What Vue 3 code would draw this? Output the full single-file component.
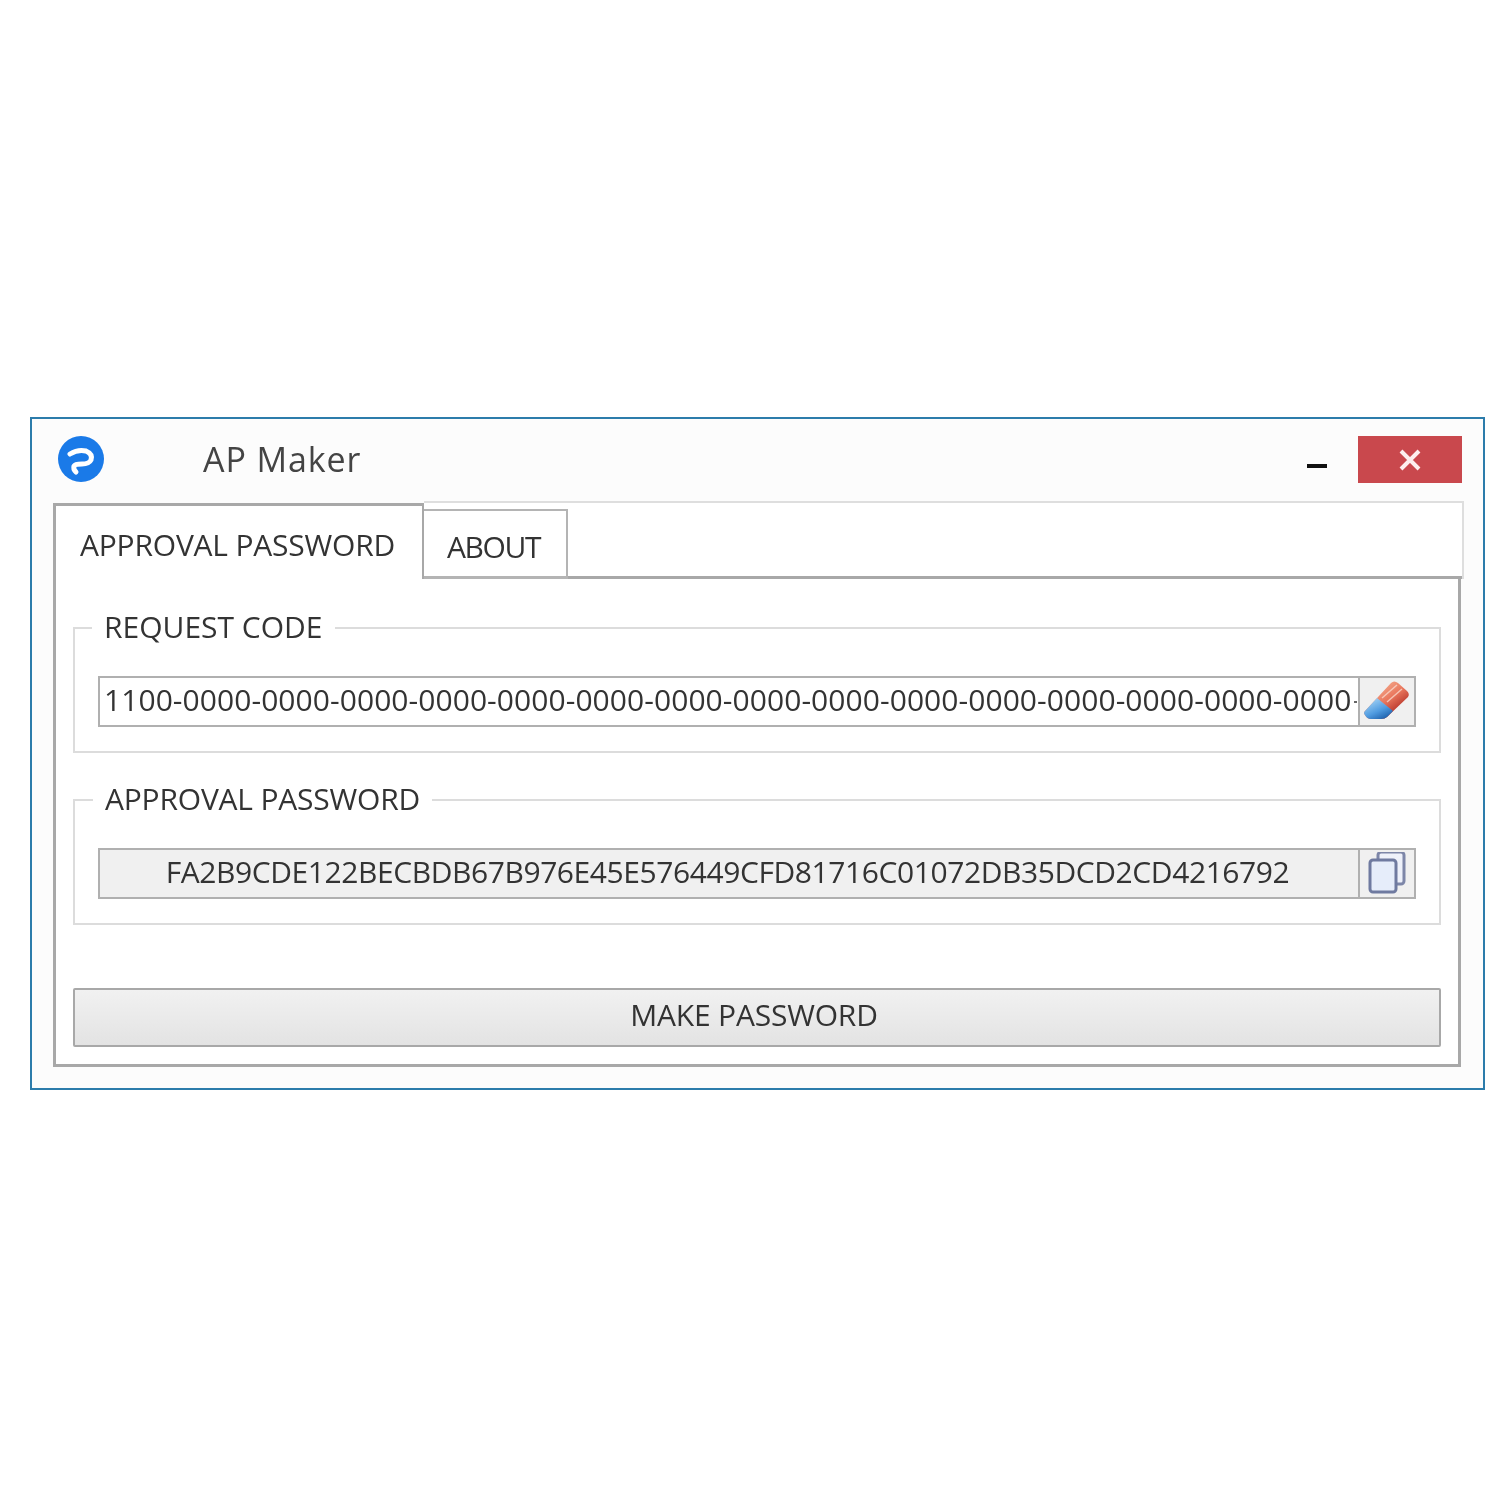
<template>
  <div class="page">
    <div class="window">
      <div class="titlebar">
        <svg class="logo" viewBox="0 0 46 46">
          <circle cx="23" cy="23" r="23" fill="#1a7ae8" />
          <path d="M12 18Q20 13 28 15Q35 18 33 24Q31 28 24 28Q17 28 16 30Q15 33 18 36" fill="none" stroke="#fff" stroke-width="5" stroke-linecap="round" />
        </svg>
        <span class="title">AP Maker</span>
        <span class="minimize"></span>
        <button class="close">
          <svg viewBox="0 0 22 22" width="22" height="22">
            <path d="M2 2L20 20M20 2L2 20" stroke="#fdeeee" stroke-width="4" />
          </svg>
        </button>
      </div>

      <div class="tabs">
        <div class="tab active">APPROVAL PASSWORD</div>
        <div class="tab-others">
          <div class="tab">ABOUT</div>
          <div class="tab-rest"></div>
        </div>
      </div>

      <div class="pane">
        <fieldset class="group">
          <legend>REQUEST CODE</legend>
          <div class="field">
            <div class="value code">{{ requestCode }}</div>
            <button class="side">
              <svg viewBox="0 0 48 44" width="48" height="44">
                <defs>
                  <linearGradient id="rub" x1="0.2" y1="0.1" x2="0.8" y2="0.8">
                    <stop offset="0" stop-color="#f6b597" />
                    <stop offset="0.55" stop-color="#e9765c" />
                    <stop offset="1" stop-color="#b02c24" />
                  </linearGradient>
                  <linearGradient id="rubblue" x1="0.1" y1="0.1" x2="0.7" y2="1">
                    <stop offset="0" stop-color="#a9d6f6" />
                    <stop offset="0.6" stop-color="#4f9be0" />
                    <stop offset="1" stop-color="#1f62ad" />
                  </linearGradient>
                </defs>
                <path d="M2 31L28 3Q31 0 35 3L44 11Q47 14 45 17L24 37Q22 39 18 39H8Q4 39 2 35Q0 33 2 31Z" fill="url(#rub)" />
                <path d="M2 31L14 18L30 31L24 37Q22 39 18 39H8Q4 39 2 35Q0 33 2 31Z" fill="url(#rubblue)" />
                <path d="M19 18L34 5M24 22L39 9" stroke="#fbe3d8" stroke-width="1.5" opacity="0.7" />
              </svg>
            </button>
          </div>
        </fieldset>

        <fieldset class="group second">
          <legend>APPROVAL PASSWORD</legend>
          <div class="field">
            <div class="value password">FA2B9CDE122BECBDB67B976E45E576449CFD81716C01072DB35DCD2CD4216792</div>
            <button class="side">
              <svg viewBox="0 2 40 44" width="40" height="44">
                <rect x="11" y="2" width="26" height="32" rx="3" fill="#eef1fa" stroke="#7d86a8" stroke-width="3" />
                <rect x="3" y="10" width="26" height="32" rx="3" fill="#e6edfa" stroke="#6f7aa0" stroke-width="3" />
              </svg>
            </button>
          </div>
        </fieldset>

        <button class="make">MAKE PASSWORD</button>
      </div>
    </div>
  </div>
</template>

<script setup>
const requestCode = ['1100', ...Array(15).fill('0000')].join('-')
</script>

<style>
html, body {
  background: #fff;
}
</style>

<style scoped>
.page {
  height: 1500px;
  box-sizing: border-box;
  padding: 417px 0 0 30px;
  font-family: "Open Sans", "Liberation Sans", sans-serif;
  color: #333;
}
.window {
  width: 1455px;
  height: 673px;
  box-sizing: border-box;
  border: 2px solid #2c7cab;
  background: #fcfcfc;
  padding: 0 19px 0 21px;
  filter: blur(0.5px);
}
.titlebar {
  display: flex;
  align-items: flex-start;
  height: 82px;
}
.logo {
  width: 46px;
  height: 46px;
  margin: 17px 0 0 5px;
}
.title {
  flex: 1;
  margin: 17px 0 0 99px;
  font-size: 34px;
  line-height: 46px;
  letter-spacing: 0.9px;
  color: #444;
}
.minimize {
  width: 20px;
  height: 4px;
  margin: 45px 31px 0 0;
  background: #111;
}
.close {
  display: flex;
  align-items: center;
  justify-content: center;
  width: 104px;
  height: 47px;
  margin: 17px 2px 0 0;
  padding: 0;
  border: none;
  background: #c9484d;
}
.tabs {
  display: flex;
  align-items: flex-end;
  height: 78px;
}
.tab {
  box-sizing: border-box;
  width: 144px;
  height: 70px;
  padding-right: 3px;
  border: 2px solid #b4b4b4;
  border-left: none;
  border-bottom-width: 3px;
  text-align: center;
  font-size: 30px;
  line-height: 72px;
  letter-spacing: -1.4px;
}
.tab.active {
  width: 371px;
  height: 76px;
  padding: 0 0 0 24px;
  border: 3px solid #a8a8a8;
  border-bottom: none;
  border-right-width: 2px;
  background: #fff;
  text-align: left;
  line-height: 78px;
  letter-spacing: -0.2px;
}
.tab-others {
  flex: 1;
  display: flex;
  align-items: flex-end;
  height: 78px;
  box-sizing: border-box;
  border-top: 2px solid #dedede;
  border-right: 2px solid #dedede;
  background: #fff;
}
.tab-rest {
  flex: 1;
  height: 3px;
  background: #a8a8a8;
}
.pane {
  width: 1408px;
  height: 488px;
  box-sizing: border-box;
  padding: 30px 17px 0;
  border: 3px solid #a8a8a8;
  border-top: none;
  background: #fff;
}
.group {
  margin: 0;
  padding: 29px 0 24px;
  border: 2px solid #dcdcdc;
  min-width: 0;
}
.group.second {
  margin-top: 28px;
}
.group legend {
  margin-left: 17px;
  padding: 0 12px 2px;
  font-size: 30px;
  line-height: 36px;
}
.group.second legend {
  margin-left: 18px;
  letter-spacing: -0.2px;
}
.field {
  display: flex;
  height: 51px;
  margin: 0 23px 0 23px;
  box-sizing: border-box;
  border: 2px solid #b0b0b0;
}
.value {
  flex: 1;
  min-width: 0;
  overflow: hidden;
  white-space: nowrap;
  font-size: 30px;
  line-height: 43px;
}
.code {
  padding-left: 4px;
  letter-spacing: 0.06px;
  /* the next dash of the code, cut off by the field in the original */
  background: linear-gradient(#666, #666) right 1px center / 3px 2px no-repeat, #fff;
}
.password {
  padding-right: 3px;
  letter-spacing: -0.42px;
  background: #f0f0f0;
  text-align: center;
}
.side {
  display: flex;
  align-items: center;
  justify-content: center;
  width: 56px;
  padding: 0;
  border: none;
  border-left: 2px solid #b0b0b0;
  background: #f0f0f0;
}
.make {
  display: block;
  width: 100%;
  height: 59px;
  margin-top: 63px;
  padding: 0 6px 6px 0;
  border: 2px solid #a8a8a8;
  border-radius: 2px;
  background: linear-gradient(#f1f1f1, #e3e3e3);
  font-family: inherit;
  font-size: 30px;
  letter-spacing: -0.2px;
  color: #333;
}
</style>
